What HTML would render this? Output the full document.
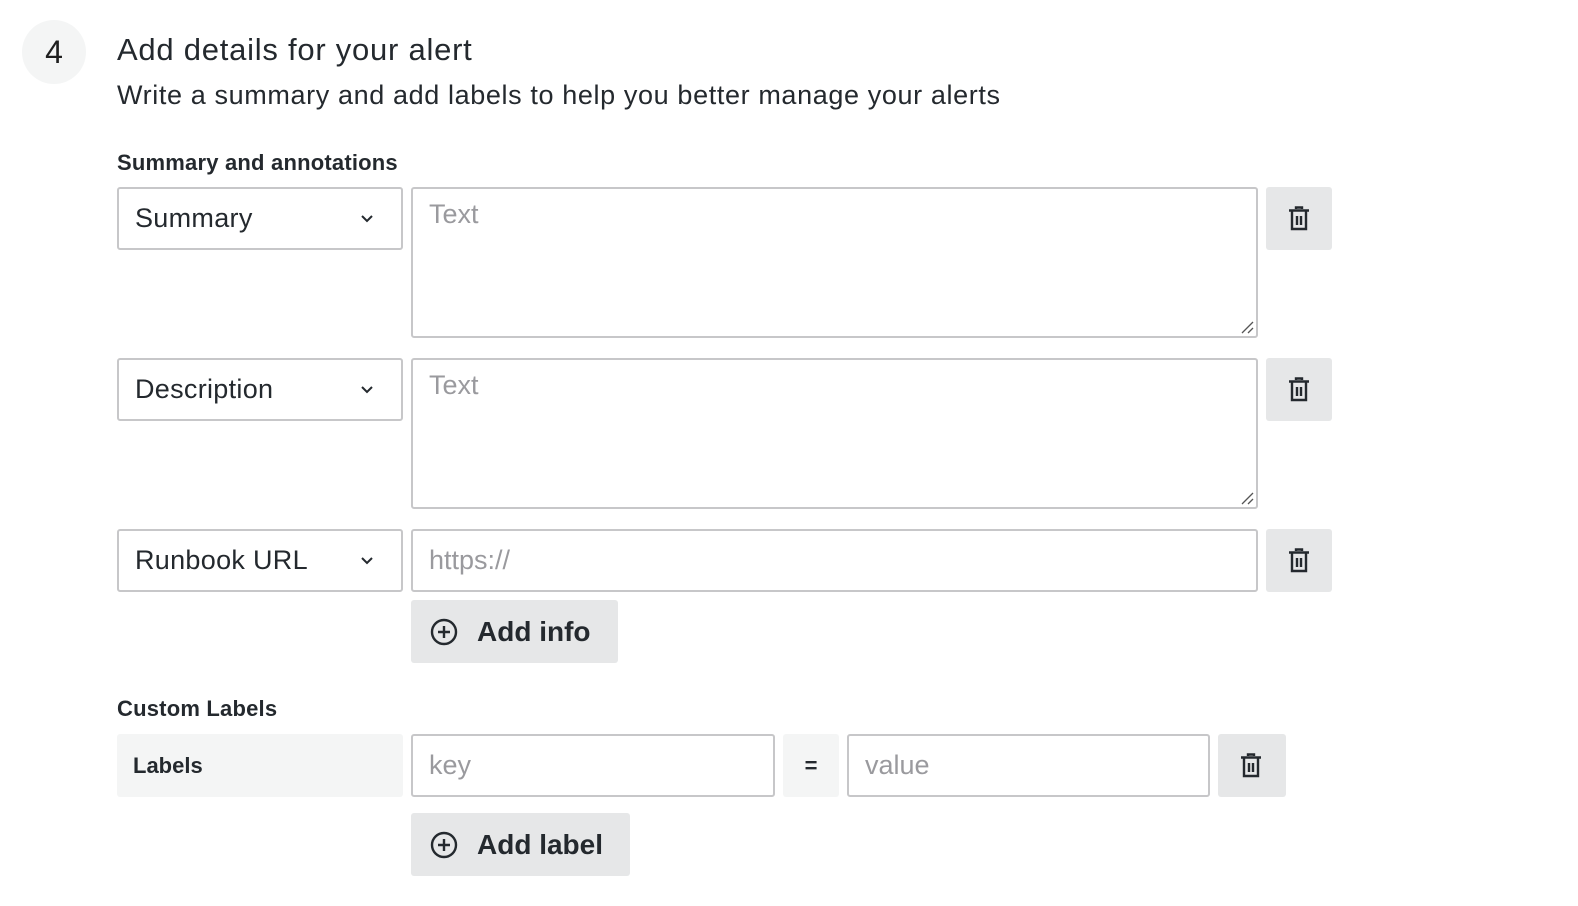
<!DOCTYPE html>
<html><head><style>
*{box-sizing:border-box;margin:0;padding:0}
body{width:1578px;height:906px;background:#fff;font-family:"Liberation Sans",sans-serif;color:#24292e;position:relative;overflow:hidden}
.a{position:absolute}
.circ{left:22px;top:20px;width:64px;height:64px;border-radius:50%;background:#f4f5f5;font-size:32px;text-align:center;line-height:64px;color:#1f1f1f}
.inp{border:2px solid #c7c7c9;border-radius:3px;background:#fff}
.sel{font-size:27px;color:#24292e;padding-left:16px;line-height:59px;letter-spacing:0.3px}
.chev{position:absolute;right:26px;top:22px}
.ph{color:#9a9a9e;font-size:27px;padding-left:16px}
.btn{background:#e6e7e8;border-radius:3px}
.trash{width:66px;height:63px}
.trash svg{position:absolute;left:21px;top:19px}
.lbl{font-size:22px;font-weight:bold;color:#24292e;letter-spacing:0.2px}
.addb{font-size:28px;font-weight:bold;color:#24292e;line-height:63px;padding-left:66px}
.addb svg{position:absolute;left:19px;top:18px}
.rz{position:absolute;right:2px;bottom:2px}
</style></head><body>
<div class="a circ">4</div>
<div class="a" style="left:117px;top:32px;font-size:31px;color:#24292e;letter-spacing:0.75px">Add details for your alert</div>
<div class="a" style="left:117px;top:80px;font-size:27px;color:#24292e;letter-spacing:0.62px">Write a summary and add labels to help you better manage your alerts</div>
<div class="a lbl" style="left:117px;top:150px">Summary and annotations</div>

<div class="a inp sel" style="left:117px;top:187px;width:286px;height:63px">Summary<svg class="chev" width="16" height="16" viewBox="0 0 16 16"><path d="M3 5l5 5 5-5" fill="none" stroke="#24292e" stroke-width="2"/></svg></div>
<div class="a inp ph" style="left:411px;top:187px;width:847px;height:151px;padding-top:10px">Text<svg class="rz" width="14" height="14" viewBox="0 0 14 14"><path d="M13 2L2 13M13 8L8 13" stroke="#555" stroke-width="1.3"/></svg></div>
<div class="a btn trash" style="left:1266px;top:187px"><svg width="24" height="26" viewBox="0 0 24 26"><path d="M9 3V1.5h6V3M2 4.5h20M5 5v18h14V5M10 10v9M14 10v9" fill="none" stroke="#24292e" stroke-width="2.4"/></svg></div>

<div class="a inp sel" style="left:117px;top:358px;width:286px;height:63px">Description<svg class="chev" width="16" height="16" viewBox="0 0 16 16"><path d="M3 5l5 5 5-5" fill="none" stroke="#24292e" stroke-width="2"/></svg></div>
<div class="a inp ph" style="left:411px;top:358px;width:847px;height:151px;padding-top:10px">Text<svg class="rz" width="14" height="14" viewBox="0 0 14 14"><path d="M13 2L2 13M13 8L8 13" stroke="#555" stroke-width="1.3"/></svg></div>
<div class="a btn trash" style="left:1266px;top:358px"><svg width="24" height="26" viewBox="0 0 24 26"><path d="M9 3V1.5h6V3M2 4.5h20M5 5v18h14V5M10 10v9M14 10v9" fill="none" stroke="#24292e" stroke-width="2.4"/></svg></div>

<div class="a inp sel" style="left:117px;top:529px;width:286px;height:63px">Runbook URL<svg class="chev" width="16" height="16" viewBox="0 0 16 16"><path d="M3 5l5 5 5-5" fill="none" stroke="#24292e" stroke-width="2"/></svg></div>
<div class="a inp ph" style="left:411px;top:529px;width:847px;height:63px;line-height:59px">https://</div>
<div class="a btn trash" style="left:1266px;top:529px"><svg width="24" height="26" viewBox="0 0 24 26"><path d="M9 3V1.5h6V3M2 4.5h20M5 5v18h14V5M10 10v9M14 10v9" fill="none" stroke="#24292e" stroke-width="2.4"/></svg></div>

<div class="a btn addb" style="left:411px;top:600px;width:207px;height:63px"><svg width="28" height="28" viewBox="0 0 28 28"><circle cx="14" cy="14" r="12" fill="none" stroke="#24292e" stroke-width="2.4"/><path d="M14 8v12M8 14h12" stroke="#24292e" stroke-width="2.4"/></svg>Add info</div>

<div class="a lbl" style="left:117px;top:696px">Custom Labels</div>
<div class="a btn" style="left:117px;top:734px;width:286px;height:63px;font-size:22px;font-weight:bold;line-height:63px;padding-left:16px;background:#f4f5f5">Labels</div>
<div class="a inp ph" style="left:411px;top:734px;width:364px;height:63px;line-height:59px">key</div>
<div class="a btn" style="left:783px;top:734px;width:56px;height:63px;text-align:center;line-height:63px;font-size:22px;font-weight:bold;background:#f4f5f5">=</div>
<div class="a inp ph" style="left:847px;top:734px;width:363px;height:63px;line-height:59px">value</div>
<div class="a btn trash" style="left:1218px;top:734px;width:68px"><svg width="24" height="26" viewBox="0 0 24 26"><path d="M9 3V1.5h6V3M2 4.5h20M5 5v18h14V5M10 10v9M14 10v9" fill="none" stroke="#24292e" stroke-width="2.4"/></svg></div>

<div class="a btn addb" style="left:411px;top:813px;width:219px;height:63px"><svg width="28" height="28" viewBox="0 0 28 28"><circle cx="14" cy="14" r="12" fill="none" stroke="#24292e" stroke-width="2.4"/><path d="M14 8v12M8 14h12" stroke="#24292e" stroke-width="2.4"/></svg>Add label</div>
</body></html>
